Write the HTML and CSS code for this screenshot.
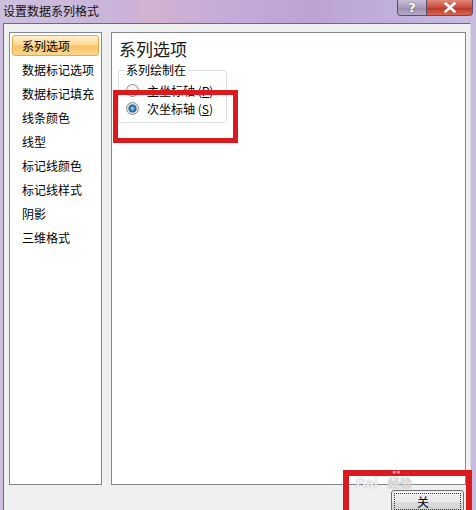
FILE: index.html
```html
<!DOCTYPE html>
<html>
<head>
<meta charset="utf-8">
<title>设置数据系列格式</title>
<link rel="stylesheet" href="styles.css">
</head>
<body>
<div class="window">
  <div class="titlebar">
    <span class="title">设置数据系列格式</span>
    <div class="caption">
      <span class="cbtn help">?</span>
      <span class="cbtn close"><svg width="14" height="11" viewBox="0 0 14 11"><path d="M2.5 1.5 L11.5 9.5 M11.5 1.5 L2.5 9.5" stroke="#fff" stroke-width="2.6" stroke-linecap="round"/></svg></span>
    </div>
  </div>

  <div class="client">
    <div class="main">
      <ul class="nav">
        <li class="sel">系列选项</li>
        <li>数据标记选项</li>
        <li>数据标记填充</li>
        <li>线条颜色</li>
        <li>线型</li>
        <li>标记线颜色</li>
        <li>标记线样式</li>
        <li>阴影</li>
        <li>三维格式</li>
      </ul>
      <div class="panel">
        <h2 class="panel-title">系列选项</h2>
        <fieldset class="group">
          <legend>系列绘制在</legend>
          <label class="opt"><span class="radio"></span>主坐标轴 (<u>P</u>)</label>
          <label class="opt"><span class="radio on"></span>次坐标轴 (<u>S</u>)</label>
        </fieldset>
      </div>
    </div>
    <div class="footer">
      <button class="btn"><span class="focus">关</span></button>
    </div>
  </div>

  <!-- annotations drawn over the screenshot -->
  <div class="mark mark-opt"></div>
  <div class="mark mark-btn"></div>
  <div class="watermark"><span class="paw">&#9679;&#9679;</span>Bai<span class="jy">经验</span></div>
</div>
</body>
</html>
```

FILE: styles.css
```css
/* Format data series dialog */

body
{ margin: 0;
font-family: "Noto Sans CJK SC", "Noto Sans", sans-serif;
font-size: 12px;
color: #000;
}

.window
{ position: relative;
width: 476px;
height: 510px;
overflow: hidden;
background: linear-gradient(90deg, #cdc0de 0%, #c9b3da 25%, #d3b2cf 32%, #c6acd9 45%, #bba3d4 65%, #c2b0dc 85%, #c9bce0 100%);
}

.titlebar
{ height: 23px;
display: flex;
justify-content: space-between;
align-items: flex-start;
}

.title
{ padding-left: 3px;
line-height: 22px;
color: #111;
}

.caption
{ display: flex;
margin-right: 3px;
}

.cbtn
{ height: 15px;
display: flex;
align-items: center;
justify-content: center;
border: 1px solid #5b4f6e;
border-top: none;
color: #fff;
font-family: "DejaVu Sans", sans-serif;
font-weight: bold;
font-size: 13px;
}

.help
{ width: 28px;
border-radius: 0 0 0 4px;
background: linear-gradient(#c9bfd6, #a89cba 50%, #9a8caf 51%, #b7abc9);
border-right: none;
text-shadow: 0 0 2px #554b66;
}

.close
{ width: 45px;
border-radius: 0 0 4px 0;
background: linear-gradient(#e08a78, #c84a3a 50%, #b8342a 51%, #d8654f);
}

.client
{ margin: 0 5px 0 3px;
height: 487px;
background: #f0f0f0;
border-top: 1px solid #6e6880;
border-left: 1px solid #6e6880;
border-right: 1px solid #ddd8e6;
}

.main
{ display: flex;
gap: 9px;
padding: 8px 0 0 5px;
}

.nav
{ list-style: none;
margin: 0;
padding: 2px 2px 0;
width: 93px;
height: 453px;
box-sizing: border-box;
background: #fff;
border: 1px solid #828790;
}

.nav li
{ height: 21px;
line-height: 21px;
margin: 0 0 3px;
padding-left: 10px;
white-space: nowrap;
}

.nav li.sel
{ border: 1px solid #e5a84e;
border-radius: 3px;
padding-left: 9px;
line-height: 19px;
height: 19px;
background: linear-gradient(#fff0cf, #fdd995 45%, #f9c264 55%, #fbd690);
}

.panel
{ width: 355px;
height: 453px;
box-sizing: border-box;
background: #fff;
border: 1px solid #828790;
padding: 6px 0 0 6px;
}

.panel-title
{ margin: 0 0 0 1px;
font-size: 17px;
font-weight: normal;
line-height: 20px;
color: #1a1a1a;
}

.group
{ margin: 4px 0 0 0;
width: 109px;
box-sizing: border-box;
padding: 4px 0 5px 5px;
border: 1px solid #d5dfe5;
border-radius: 3px;
}

.group legend
{ padding: 0 2px;
line-height: 14px;
}

.opt
{ display: flex;
align-items: center;
height: 18px;
padding-left: 2px;
white-space: nowrap;
}

.opt u
{ text-underline-offset: 1px;
}

.radio
{ width: 11px;
height: 11px;
margin-right: 8px;
border-radius: 50%;
border: 1px solid #8e8f8f;
background: radial-gradient(circle at 50% 40%, #fff 0, #f2f2f2 50%, #d4d4d4 100%);
}

.radio.on
{ background: radial-gradient(circle, #b6e0f8 0, #3d8fd0 2px, #1b5a92 3.5px, #dcdcdc 4.5px, #f7f7f7 100%);
}

.footer
{ display: flex;
justify-content: flex-end;
padding: 5px 6px 0 0;
}

.btn
{ width: 73px;
height: 23px;
padding: 2px;
border: 1px solid #707070;
border-radius: 3px;
background: linear-gradient(#f2f2f2, #ebebeb 50%, #dddddd 51%, #cfcfcf);
font-family: inherit;
font-size: 12px;
}

.focus
{ display: block;
height: 15px;
line-height: 15px;
border: 1px dotted #333;
text-align: left;
padding-left: 22px;
}

.mark
{ position: absolute;
border: 5px solid #da1a1f;
}

.mark-opt
{ left: 113px;
top: 90px;
width: 115px;
height: 43px;
}

.mark-btn
{ left: 343px;
top: 470px;
width: 117px;
height: 50px;
border-width: 6px;
}

.watermark
{ position: absolute;
left: 356px;
top: 476px;
font-family: "Liberation Sans", sans-serif;
font-weight: bold;
font-size: 14px;
line-height: 14px;
color: rgba(255, 255, 255, 0.85);
text-shadow: 0 0 1px #9a9a9a;
}

.paw
{ position: absolute;
left: 36px;
top: -8px;
font-size: 7px;
line-height: 7px;
color: #f4a6b0;
text-shadow: none;
}

.jy
{ font-family: "Noto Sans CJK SC", sans-serif;
font-size: 12px;
margin-left: 10px;
color: rgba(255, 255, 255, 0.6);
}
```
